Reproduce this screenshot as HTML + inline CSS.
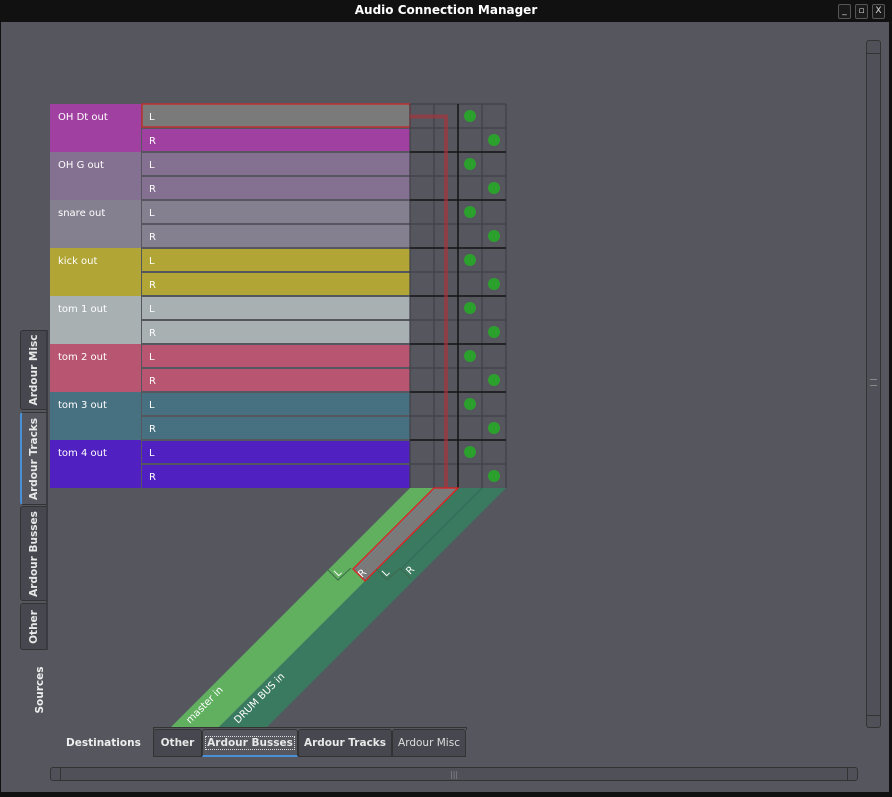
<!DOCTYPE html>
<html><head><meta charset="utf-8"><style>
html,body{margin:0;padding:0;width:892px;height:797px;overflow:hidden;background:#111;font-family:"DejaVu Sans","Liberation Sans",sans-serif;}
#title{position:absolute;left:0;top:0;width:892px;height:22px;background:#111;color:#fff;font-weight:bold;font-size:12px;text-align:center;line-height:21px;}
#body{position:absolute;left:1px;top:22px;width:888px;height:770px;background:#55565e;}
.wb{position:absolute;top:4px;width:11px;height:13px;border:1px solid #555;border-radius:2px;color:#ddd;font-size:9px;text-align:center;line-height:13px;background:#1a1a1a}
.vt{position:absolute;left:20px;width:27px;background:#47484f;border:1px solid #333;border-radius:3px 0 0 3px;box-sizing:border-box;}
.vt span{position:absolute;left:50%;top:50%;transform:translate(-50%,-50%) rotate(-90deg);white-space:nowrap;color:#e8e8e8;font-weight:bold;font-size:10.5px;}
.ht{position:absolute;top:729px;height:28px;background:#47484f;border:1px solid #333;box-sizing:border-box;border-radius:3px 3px 0 0;color:#e8e8e8;font-size:10.5px;font-weight:bold;line-height:27px;text-align:center;white-space:nowrap;}
</style></head><body>
<div id="title">Audio Connection Manager</div>
<div class="wb" style="left:838px">_</div><div class="wb" style="left:855px">▫</div><div class="wb" style="left:872px">X</div>
<div id="body"></div>
<svg width="892" height="797" style="position:absolute;left:0;top:0" font-family="DejaVu Sans, Liberation Sans, sans-serif">
<g font-size="10" fill="#fff">
<rect x="50" y="104" width="91" height="48" fill="#a040a0"/>
<rect x="50" y="152" width="91" height="48" fill="#847090"/>
<rect x="50" y="200" width="91" height="48" fill="#858090"/>
<rect x="50" y="248" width="91" height="48" fill="#b0a535"/>
<rect x="50" y="296" width="91" height="48" fill="#a8b0b2"/>
<rect x="50" y="344" width="91" height="48" fill="#b85570"/>
<rect x="50" y="392" width="91" height="48" fill="#477080"/>
<rect x="50" y="440" width="91" height="48" fill="#5020c0"/>
<rect x="142" y="104" width="268" height="23" fill="#7a7a7a" stroke="#c03030" stroke-width="1.5"/>
<rect x="142" y="129" width="268" height="22" fill="#a040a0"/>
<rect x="142" y="153" width="268" height="22" fill="#847090"/><rect x="142" y="177" width="268" height="22" fill="#847090"/>
<rect x="142" y="201" width="268" height="22" fill="#858090"/><rect x="142" y="225" width="268" height="22" fill="#858090"/>
<rect x="142" y="249" width="268" height="22" fill="#b0a535"/><rect x="142" y="273" width="268" height="22" fill="#b0a535"/>
<rect x="142" y="297" width="268" height="22" fill="#a8b0b2"/><rect x="142" y="321" width="268" height="22" fill="#a8b0b2"/>
<rect x="142" y="345" width="268" height="22" fill="#b85570"/><rect x="142" y="369" width="268" height="22" fill="#b85570"/>
<rect x="142" y="393" width="268" height="22" fill="#477080"/><rect x="142" y="417" width="268" height="22" fill="#477080"/>
<rect x="142" y="441" width="268" height="22" fill="#5020c0"/><rect x="142" y="465" width="268" height="23" fill="#5020c0"/>
<text x="58" y="120">OH Dt out</text><text x="58" y="168">OH G out</text><text x="58" y="216">snare out</text><text x="58" y="264">kick out</text>
<text x="58" y="312">tom 1 out</text><text x="58" y="360">tom 2 out</text><text x="58" y="408">tom 3 out</text><text x="58" y="456">tom 4 out</text>
<text x="149" y="120">L</text><text x="149" y="144">R</text><text x="149" y="168">L</text><text x="149" y="192">R</text>
<text x="149" y="216">L</text><text x="149" y="240">R</text><text x="149" y="264">L</text><text x="149" y="288">R</text>
<text x="149" y="312">L</text><text x="149" y="336">R</text><text x="149" y="360">L</text><text x="149" y="384">R</text>
<text x="149" y="408">L</text><text x="149" y="432">R</text><text x="149" y="456">L</text><text x="149" y="480">R</text>
</g>
<g stroke="#404048" stroke-width="1.2">
<line x1="410" y1="104" x2="410" y2="488"/><line x1="434" y1="104" x2="434" y2="488"/><line x1="482" y1="104" x2="482" y2="488"/><line x1="506" y1="104" x2="506" y2="488"/>
<line x1="410" y1="104" x2="506" y2="104"/>
<line x1="410" y1="128" x2="506" y2="128"/><line x1="410" y1="176" x2="506" y2="176"/><line x1="410" y1="224" x2="506" y2="224"/><line x1="410" y1="272" x2="506" y2="272"/>
<line x1="410" y1="320" x2="506" y2="320"/><line x1="410" y1="368" x2="506" y2="368"/><line x1="410" y1="416" x2="506" y2="416"/><line x1="410" y1="464" x2="506" y2="464"/>
</g>
<g stroke="#141414" stroke-width="1.5">
<line x1="458" y1="104" x2="458" y2="488"/>
<line x1="410" y1="152" x2="506" y2="152"/><line x1="410" y1="200" x2="506" y2="200"/><line x1="410" y1="248" x2="506" y2="248"/><line x1="410" y1="296" x2="506" y2="296"/>
<line x1="410" y1="344" x2="506" y2="344"/><line x1="410" y1="392" x2="506" y2="392"/><line x1="410" y1="440" x2="506" y2="440"/>
</g>
<path d="M410 116.5 H446 V488" fill="none" stroke="#b03038" stroke-opacity="0.6" stroke-width="4"/>
<g fill="#2ca02c">
<circle cx="470" cy="116" r="6"/><circle cx="494" cy="140" r="6"/><circle cx="470" cy="164" r="6"/><circle cx="494" cy="188" r="6"/>
<circle cx="470" cy="212" r="6"/><circle cx="494" cy="236" r="6"/><circle cx="470" cy="260" r="6"/><circle cx="494" cy="284" r="6"/>
<circle cx="470" cy="308" r="6"/><circle cx="494" cy="332" r="6"/><circle cx="470" cy="356" r="6"/><circle cx="494" cy="380" r="6"/>
<circle cx="470" cy="404" r="6"/><circle cx="494" cy="428" r="6"/><circle cx="470" cy="452" r="6"/><circle cx="494" cy="476" r="6"/>
</g>
<polygon points="410,488 458,488 218,728 170,728" fill="#60b060"/>
<polygon points="458,488 506,488 266,728 218,728" fill="#3a7a60"/>
<polygon points="434,488 458,488 365,581 353,569" fill="#7a7a7a" stroke="#e02020" stroke-width="1.3"/>
<line x1="482" y1="488" x2="400" y2="570" stroke="#34675a" stroke-width="1"/>
<g fill="none" stroke="#3e6a4a" stroke-width="1">
<polyline points="327,569 338,580 351,568"/>
<polyline points="376,569 387,580 400,568"/>
<polyline points="401,569 411,579"/>
</g>
<g fill="#fff" font-size="10">
<text transform="translate(338,577) rotate(-45)">L</text>
<text transform="translate(362,578) rotate(-45)">R</text>
<text transform="translate(386,577) rotate(-45)">L</text>
<text transform="translate(410,575) rotate(-45)">R</text>
<text transform="translate(190,724) rotate(-45)">master in</text>
<text transform="translate(238,724) rotate(-45)">DRUM BUS in</text>
</g>
</svg>
<div class="vt" style="top:330px;height:80px"><span>Ardour Misc</span></div>
<div class="vt" style="top:412px;height:93px;background:#55565e;border-left:2px solid #4a90d9"><span>Ardour Tracks</span></div>
<div class="vt" style="top:506px;height:95px"><span>Ardour Busses</span></div>
<div class="vt" style="top:603px;height:47px"><span>Other</span></div>
<div style="position:absolute;left:46px;top:330px;width:2px;height:320px;background:#3a3a40"></div>
<div style="position:absolute;left:40px;top:690px;transform:translate(-50%,-50%) rotate(-90deg);color:#eee;font-weight:bold;font-size:10.5px;white-space:nowrap">Sources</div>
<div style="position:absolute;left:66px;top:737px;color:#eee;font-weight:bold;font-size:10.5px">Destinations</div>
<div style="position:absolute;left:153px;top:727px;width:314px;height:3px;border:1px solid #333;border-bottom:none;box-sizing:border-box"></div>
<div class="ht" style="left:153px;width:49px">Other</div>
<div class="ht" style="left:202px;width:96px;background:#55565e;border-bottom:2px solid #4a90d9;"><span style="border:1px dotted #ddd;padding:0 1px">Ardour Busses</span></div>
<div class="ht" style="left:298px;width:94px">Ardour Tracks</div>
<div class="ht" style="left:392px;width:74px;font-weight:normal;color:#ddd">Ardour Misc</div>
<div style="position:absolute;left:50px;top:767px;width:808px;height:14px;border:1px solid #333;box-sizing:border-box;border-radius:3px;background:#4f5058"></div>
<div style="position:absolute;left:60px;top:767px;width:1px;height:14px;background:#333"></div>
<div style="position:absolute;left:847px;top:767px;width:1px;height:14px;background:#333"></div>
<div style="position:absolute;left:450px;top:770px;color:#888;font-size:8px">|||</div>
<div style="position:absolute;left:866px;top:40px;width:15px;height:688px;border:1px solid #333;box-sizing:border-box;border-radius:3px;background:#4f5058"></div>
<div style="position:absolute;left:866px;top:53px;width:15px;height:1px;background:#333"></div>
<div style="position:absolute;left:866px;top:715px;width:15px;height:1px;background:#333"></div>
<div style="position:absolute;left:870px;top:379px;width:7px;height:5px;border-top:1px solid #888;border-bottom:1px solid #888"></div>
</body></html>
